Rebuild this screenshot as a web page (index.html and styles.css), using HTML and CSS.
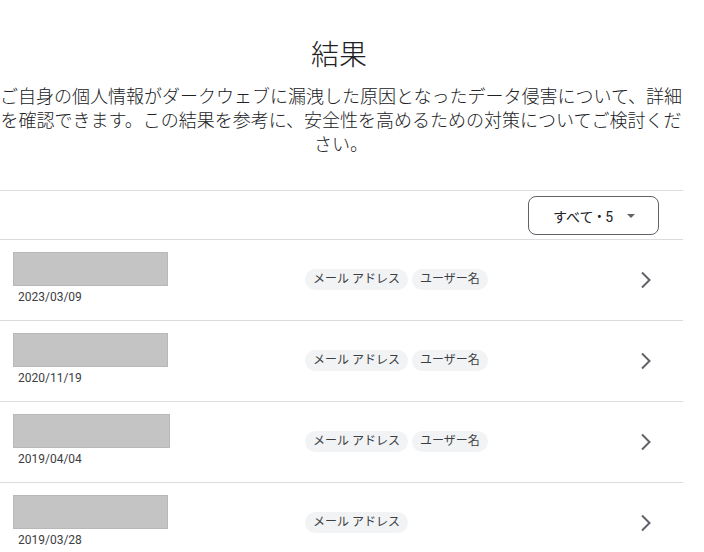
FILE: index.html
```html
<!DOCTYPE html>
<html lang='ja'>
	<head>
		<meta charset='utf-8' />
		<title>結果</title>
		<link rel="stylesheet" href="styles.css">
	</head>
	<body>
		<div id="divContent">
			<div class="divHeader">
				<h1>結果</h1>
				<p>ご自身の個人情報がダークウェブに漏洩した原因となったデータ侵害について、詳細を確認できます。この結果を参考に、安全性を高めるための対策についてご検討ください。</p>
			</div>
			<div class="divFilter">
				<button class="buttonFilter">すべて • 5<span class="caret"></span></button>
			</div>
			<div class="divRow">
				<div class="divSource">
					<div class="blank" style="width:155px"></div>
					<span class="date">2023/03/09</span>
				</div>
				<div class="divChips">
					<span class="chip">メール アドレス</span>
					<span class="chip">ユーザー名</span>
				</div>
				<svg class="chevron" width="12" height="18" viewBox="0 0 12 18"><polyline points="2,1.5 9.5,9 2,16.5" fill="none" stroke="currentColor" stroke-width="2" /></svg>
			</div>
			<div class="divRow">
				<div class="divSource">
					<div class="blank" style="width:155px"></div>
					<span class="date">2020/11/19</span>
				</div>
				<div class="divChips">
					<span class="chip">メール アドレス</span>
					<span class="chip">ユーザー名</span>
				</div>
				<svg class="chevron" width="12" height="18" viewBox="0 0 12 18"><polyline points="2,1.5 9.5,9 2,16.5" fill="none" stroke="currentColor" stroke-width="2" /></svg>
			</div>
			<div class="divRow">
				<div class="divSource">
					<div class="blank" style="width:157px"></div>
					<span class="date">2019/04/04</span>
				</div>
				<div class="divChips">
					<span class="chip">メール アドレス</span>
					<span class="chip">ユーザー名</span>
				</div>
				<svg class="chevron" width="12" height="18" viewBox="0 0 12 18"><polyline points="2,1.5 9.5,9 2,16.5" fill="none" stroke="currentColor" stroke-width="2" /></svg>
			</div>
			<div class="divRow">
				<div class="divSource">
					<div class="blank" style="width:155px"></div>
					<span class="date">2019/03/28</span>
				</div>
				<div class="divChips">
					<span class="chip">メール アドレス</span>
				</div>
				<svg class="chevron" width="12" height="18" viewBox="0 0 12 18"><polyline points="2,1.5 9.5,9 2,16.5" fill="none" stroke="currentColor" stroke-width="2" /></svg>
			</div>
		</div>
	</body>
</html>
```

FILE: styles.css
```css
body {
	margin: 0px;
	background: #ffffff;
	color: #202124;
	font-family: Roboto, "Noto Sans CJK JP", sans-serif;
	overflow: hidden;
}
#divContent {
	width: 684px;
	margin-left: -1px;
	display: flex;
	flex-direction: column;
}
.divHeader {
	display: flex;
	flex-direction: column;
	align-items: center;
	padding-top: 38px;
}
h1 {
	margin: 0px 0px 0px -4px;
	font-size: 28px;
	line-height: 36px;
	font-weight: 300;
	color: #202124;
}
.divHeader p {
	margin: 11px 0px 0px 0px;
	font-size: 18px;
	line-height: 24px;
	font-weight: 300;
	text-align: center;
	color: #202124;
}
.divFilter {
	margin-top: 33px;
	border-top: 1px solid #dadce0;
	border-bottom: 1px solid #dadce0;
	display: flex;
	justify-content: flex-end;
	padding: 5px 24px 4px 0px;
}
.buttonFilter {
	height: 39px;
	width: 131px;
	box-sizing: border-box;
	border: 1px solid #5f6368;
	border-radius: 8px;
	background: #ffffff;
	font-family: Roboto, "Noto Sans CJK JP", sans-serif;
	font-size: 14px;
	color: #202124;
	display: flex;
	align-items: center;
	padding: 0px 0px 0px 24px;
}
.caret {
	margin-left: 14px;
	width: 0px;
	height: 0px;
	border-left: 4px solid transparent;
	border-right: 4px solid transparent;
	border-top: 4px solid #5f6368;
}
.divRow {
	display: flex;
	flex-direction: row;
	align-items: center;
	border-bottom: 1px solid #dadce0;
	padding: 12px 31px 15px 14px;
}
.divSource {
	width: 292px;
	display: flex;
	flex-direction: column;
}
.blank {
	height: 34px;
	box-sizing: border-box;
	background: #c4c4c4;
	border: 1px solid #b8b8b8;
}
.date {
	margin-top: 3px;
	padding-left: 5px;
	font-size: 12px;
	line-height: 16px;
	color: #3c4043;
}
.divChips {
	flex: 1;
	display: flex;
	flex-direction: row;
	gap: 4px;
	padding-top: 2px;
}
.chip {
	height: 21px;
	line-height: 21px;
	padding: 0px 8px;
	border-radius: 11px;
	background: #f1f3f4;
	font-size: 12px;
	color: #3c4043;
}
.chevron {
	color: #5f6368;
	margin-top: 2px;
}
```
